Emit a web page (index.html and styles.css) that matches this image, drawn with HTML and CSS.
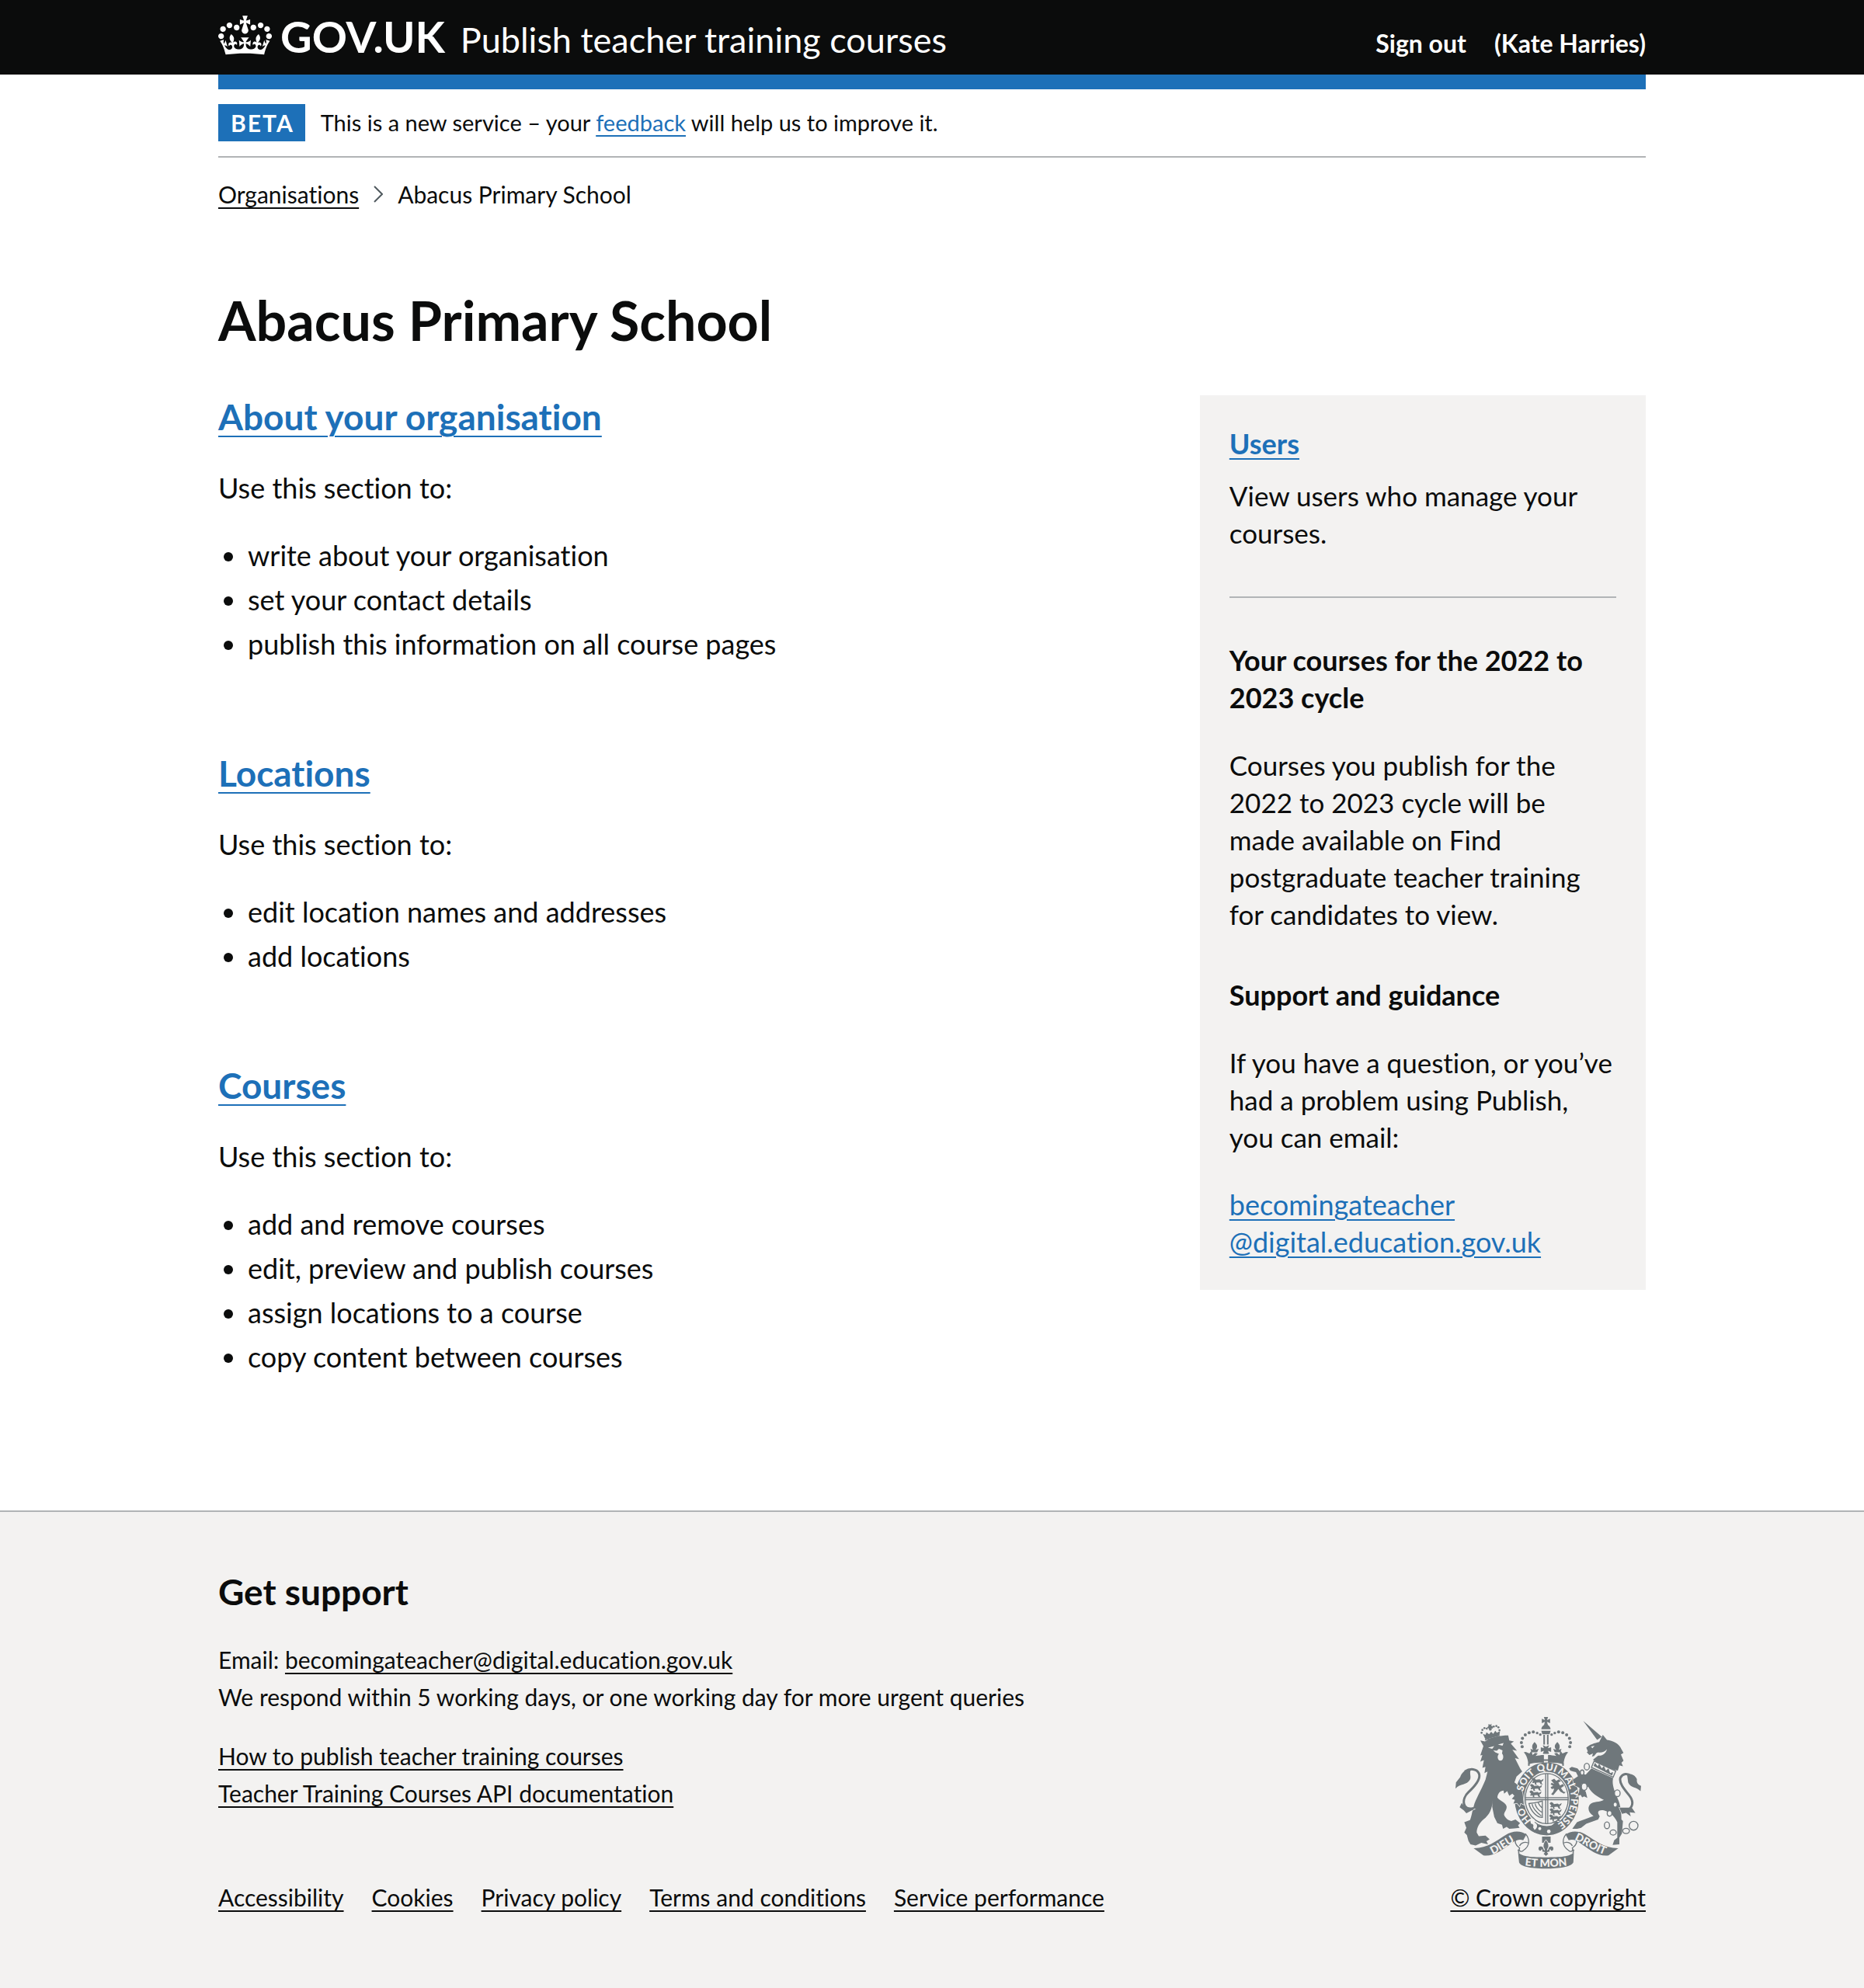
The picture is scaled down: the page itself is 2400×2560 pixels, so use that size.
FILE: index.html
```html
<!DOCTYPE html>
<html lang="en">
<head>
<meta charset="utf-8">
<meta name="viewport" content="width=device-width, initial-scale=1">
<title>Abacus Primary School - Publish teacher training courses - GOV.UK</title>
<link rel="stylesheet" href="styles.css">
</head>
<body>
<header class="header">
  <div class="container header-inner">
    <a class="logo" href="#">
      <svg class="crown" viewBox="0 0 132 97" aria-hidden="true"><path fill="currentColor" fill-rule="evenodd" d="M25 30.2c3.5 1.5 7.7-.2 9.1-3.7 1.5-3.6-.2-7.8-3.9-9.2-3.6-1.4-7.6.3-9.1 3.9-1.4 3.5.3 7.5 3.9 9zM9 39.5c3.6 1.5 7.8-.2 9.2-3.7 1.5-3.6-.2-7.8-3.9-9.1-3.6-1.5-7.6.2-9.1 3.8-1.4 3.5.3 7.5 3.8 9zM4.4 57.2c3.5 1.5 7.7-.2 9.1-3.8 1.5-3.6-.2-7.7-3.9-9.1-3.5-1.5-7.6.3-9.1 3.8-1.4 3.5.3 7.6 3.9 9.1zm38.3-21.4c3.5 1.5 7.7-.2 9.1-3.8 1.5-3.6-.2-7.7-3.9-9.1-3.6-1.5-7.6.3-9.1 3.8-1.3 3.6.4 7.7 3.9 9.1zm64.4-5.6c-3.6 1.5-7.8-.2-9.1-3.7-1.5-3.6.2-7.8 3.8-9.2 3.6-1.4 7.7.3 9.2 3.9 1.3 3.5-.4 7.5-3.9 9zm15.9 9.3c-3.6 1.5-7.7-.2-9.1-3.7-1.5-3.6.2-7.8 3.7-9.1 3.6-1.5 7.7.2 9.2 3.8 1.5 3.5-.3 7.5-3.8 9zm4.7 17.7c-3.6 1.5-7.8-.2-9.2-3.8-1.5-3.6.2-7.7 3.9-9.1 3.6-1.5 7.7.3 9.2 3.8 1.3 3.5-.4 7.6-3.9 9.1zM89.3 35.8c-3.6 1.5-7.8-.2-9.2-3.8-1.4-3.6.2-7.7 3.9-9.1 3.6-1.5 7.7.3 9.2 3.8 1.4 3.6-.3 7.7-3.9 9.1zM69.7 17.7l8.9 4.7V9.3l-8.9 2.8c-.2-.3-.5-.6-.9-.9L72.4 0H59.6l3.5 11.2c-.3.3-.6.5-.9.9l-8.8-2.8v13.1l8.8-4.7c.3.3.6.7.9.9l-5 15.4v.1c-.2.8-.4 1.6-.4 2.4 0 4.1 3.1 7.5 7 8.1h.2c.3 0 .7.1 1 .1.4 0 .7 0 1-.1h.2c4-.6 7.1-4.1 7.1-8.1 0-.8-.1-1.7-.4-2.4V34l-5.1-15.4c.4-.2.7-.6 1-.9zM66 92.8c16.9 0 32.8 1.1 47.1 3.2 4-16.9 8.9-26.7 14-33.5l-9.6-3.4c1 4.9 1.1 7.2 0 10.2-1.5-1.4-3-4.3-4.2-8.7L108.6 76c2.8-2 5-3.2 7.5-3.3-4.4 9.4-10 11.9-13.6 11.2-4.3-.8-6.3-4.6-5.6-7.9 1-4.7 5.7-5.9 8-.5 4.3-8.7-3-11.4-7.6-8.8 7.1-7.2 7.9-13.5 2.1-21.1-8 6.1-8.1 12.3-4.5 20.8-4.7-5.4-12.1-2.5-9.5 6.2 3.4-5.2 7.9-2 7.2 3.1-.6 4.3-6.4 7.8-13.5 7.2-10.3-.9-10.9-8-11.2-13.8 2.5-.5 7.1 1.8 11 7.3L80.2 60c-4.1 4.4-8 5.3-12.3 5.4 1.4-4.4 8-11.6 8-11.6H55.5s6.4 7.2 7.9 11.6c-4.2-.1-8-1-12.3-5.4l1.4 16.4c3.9-5.5 8.5-7.7 10.9-7.3-.3 5.8-.9 12.8-11.1 13.8-7.2.6-12.9-2.9-13.5-7.2-.7-5 3.8-8.3 7.1-3.1 2.7-8.7-4.6-11.6-9.4-6.2 3.7-8.5 3.6-14.7-4.6-20.8-5.8 7.6-5 13.9 2.2 21.1-4.7-2.6-11.9.1-7.7 8.8 2.3-5.5 7.1-4.2 8.1.5.7 3.3-1.3 7.1-5.7 7.9-3.5.7-9-1.8-13.5-11.2 2.5.1 4.7 1.3 7.5 3.3l-4.7-15.4c-1.2 4.4-2.7 7.2-4.3 8.7-1.1-3-.9-5.3 0-10.2l-9.5 3.4c5 6.9 9.9 16.7 14 33.5 14.8-2.1 30.8-3.2 47.7-3.2z"/></svg>
      <span>GOV.UK</span>
    </a>
    <a class="service-name" href="#">Publish teacher training courses</a>
    <nav class="account" aria-label="Account">
      <a href="#">Sign out</a>
      <a href="#">(Kate Harries)</a>
    </nav>
  </div>
</header>

<div class="container">
  <div class="phase">
    <strong class="tag">BETA</strong>
    <span>This is a new service – your <a class="link" href="#">feedback</a> will help us to improve it.</span>
  </div>
  <nav class="breadcrumbs" aria-label="Breadcrumb">
    <a class="link link-dark" href="#">Organisations</a>
    <svg class="chevron" viewBox="0 0 12 22" aria-hidden="true"><path d="M1 1l10 10L1 21" fill="none" stroke="currentColor" stroke-width="2"/></svg>
    <span>Abacus Primary School</span>
  </nav>
</div>

<main class="container main">
  <h1>Abacus Primary School</h1>
  <div class="columns">
    <div class="sections">
      <section>
        <h2><a class="link" href="#">About your organisation</a></h2>
        <p>Use this section to:</p>
        <ul>
          <li>write about your organisation</li>
          <li>set your contact details</li>
          <li>publish this information on all course pages</li>
        </ul>
      </section>
      <section>
        <h2><a class="link" href="#">Locations</a></h2>
        <p>Use this section to:</p>
        <ul>
          <li>edit location names and addresses</li>
          <li>add locations</li>
        </ul>
      </section>
      <section>
        <h2><a class="link" href="#">Courses</a></h2>
        <p>Use this section to:</p>
        <ul>
          <li>add and remove courses</li>
          <li>edit, preview and publish courses</li>
          <li>assign locations to a course</li>
          <li>copy content between courses</li>
        </ul>
      </section>
    </div>
    <aside class="sidebar">
      <section class="users">
        <h3><a class="link" href="#">Users</a></h3>
        <p>View users who manage your courses.</p>
      </section>
      <section class="note">
        <h3>Your courses for the 2022 to 2023 cycle</h3>
        <p>Courses you publish for the 2022 to 2023 cycle will be made available on Find postgraduate teacher training for candidates to view.</p>
      </section>
      <section class="note">
        <h3>Support and guidance</h3>
        <p>If you have a question, or you’ve had a problem using Publish, you can email:</p>
        <p class="email"><a class="link" href="#">becomingateacher<br>@digital.education.gov.uk</a></p>
      </section>
    </aside>
  </div>
</main>

<footer class="footer">
  <div class="container footer-inner">
    <div class="footer-main">
      <h2>Get support</h2>
      <p>Email: <a class="link link-dark" href="#">becomingateacher@digital.education.gov.uk</a><br>We respond within 5 working days, or one working day for more urgent queries</p>
      <ul class="guides">
        <li><a class="link link-dark" href="#">How to publish teacher training courses</a></li>
        <li><a class="link link-dark" href="#">Teacher Training Courses API documentation</a></li>
      </ul>
      <ul class="legal">
        <li><a class="link link-dark" href="#">Accessibility</a></li>
        <li><a class="link link-dark" href="#">Cookies</a></li>
        <li><a class="link link-dark" href="#">Privacy policy</a></li>
        <li><a class="link link-dark" href="#">Terms and conditions</a></li>
        <li><a class="link link-dark" href="#">Service performance</a></li>
      </ul>
    </div>
    <a class="link link-dark copyright" href="#">
      <svg class="arms" viewBox="42 30 718 592" aria-hidden="true">
        <defs>
          <path id="garter" d="M395 458A94 109 0 0 1 395 240A94 109 0 0 1 395 458"/>
          <path id="dieu" d="M172 570C212 556 242 530 284 508"/>
          <path id="etmon" d="M296 606Q392 620 488 606"/>
          <path id="droit" d="M492 504C536 520 574 552 628 568"/>
          <path id="beast" d="M0 5l6-5 7 3 4 5 14-2 6 4 10-6-3 9-5 2 1 8 5 3h-9l-5-8-12 1-1 5 5 3h-9l-2-8-6 2-4-4 5-3z"/>
          <g id="crown-side">
            <path d="M314 168l14 6 8-10 4 16 10-8 10 2-8 10c10-2 20-4 32-4v30c-20-2-42 0-60 6-2-18-6-34-18-46zM348 130c10 10 14 18 4 30l12-4-6 14h-22l-4-14 10 4c-6-12-4-20 6-30z"/>
            <circle cx="300" cy="148" r="6"/><circle cx="297" cy="132" r="6"/><circle cx="301" cy="116" r="6"/><circle cx="312" cy="102" r="6"/><circle cx="327" cy="94" r="6"/><circle cx="343" cy="91" r="6"/><circle cx="358" cy="95" r="5"/><circle cx="370" cy="101" r="5"/>
          </g>
        </defs>
        <!-- royal crown -->
        <g class="ink">
          <use href="#crown-side"/>
          <use href="#crown-side" transform="matrix(-1 0 0 1 784 0)"/>
          <path d="M384 33h16l-4 12 12-5v17l-12-5 4 13h-16l4-13-12 5V40l12 5zM374 80c2-12 10-18 18-18s16 6 18 18zM374 86h36l-4 14h-28zM382 102h6v38h-6zM396 102h6v38h-6zM380 142l12 6 12-6-4 12 12-4v18l-12-4 4 12h-24l4-12-12 4v-18l12 4z"/>
        </g>
        <path class="line" stroke-width="6" d="M326 222c-2-16 6-22 20-22h92c14 0 22 6 20 22"/>
        <!-- garter and shield -->
        <ellipse class="band" cx="395" cy="350" rx="106" ry="123"/>
        <ellipse class="line" stroke-width="4" cx="395" cy="349" rx="83" ry="97"/>
        <path class="line" stroke-width="4" d="M391 252v194M399 252v194M311 345h168M311 353h168"/>
        <g class="ink">
          <use href="#beast" x="336" y="268"/><use href="#beast" x="330" y="292"/><use href="#beast" x="328" y="317"/>
          <use href="#beast" x="406" y="362"/><use href="#beast" x="406" y="386"/><use href="#beast" x="404" y="410"/>
          <path d="M412 278l12-6 8 8 10-6 8 8-10 4 6 12 12-6 4 8-12 8 10 14 8 2-6 6-14-8-8-10-12 14-8 10-8-4 8-10 4-12-10 2-4-8 10-4-10-6 4-6 10 4z"/>
        </g>
        <path class="line" stroke-width="4" d="M326 368c16-2 36-4 52-10v64c-20 0-44-22-52-54zM338 370c4 20 20 34 36 46M350 368c2 14 14 26 26 34M362 364c2 8 8 14 14 20"/>
        <path class="ink" d="M334 446l12-10 24 20 36 6 26-26 20 10 4 16-24 18-40 10-44-10-20-14z"/>
        <path class="paper" d="M330 428c14-4 24 4 18 14 12 4 14 20 0 28l-6-10c4-8 0-14-8-14z"/>
        <circle class="paper" cx="368" cy="465" r="6"/><circle class="paper" cx="403" cy="476" r="7"/>
        <!-- lion -->
        <g class="ink edged">
          <path d="M138 124l18 4C178 112 215 104 246 104L250 124 268 128 256 136 280 164 262 160 288 196 272 192 292 232 300 244 278 264 270 286C284 296 298 310 302 330L306 372 294 366 290 378 280 366 266 368 272 354 260 350 270 338 262 330 250 338 242 320 230 330 228 318C215 318 205 330 204 345 212 358 236 362 240 380 240 395 230 400 230 412 234 424 246 434 258 436L274 430 292 444 284 452 290 462 270 464 250 466 240 458 226 466 222 450 204 444 192 420 184 380 186 352C184 390 174 410 150 430 134 444 124 462 124 480L132 494 158 492 174 506 162 514 168 526 142 520 120 530 100 526 92 512 86 490 76 480 84 462 76 440 98 432C104 420 106 400 112 380 120 350 140 320 158 276L166 244 154 250 158 226 146 230 152 200 138 206 146 180 138 182 150 146z"/>
          <path d="M102 236C80 234 66 248 60 266L44 286 42 310C60 290 86 298 98 276 104 262 94 252 102 236zM66 366l-8 16 16 12 10 12 30-16-30-2z"/>
        </g>
        <g class="ink">
          <circle cx="143" cy="94" r="4"/><circle cx="146" cy="83" r="4"/><circle cx="154" cy="76" r="4"/><circle cx="163" cy="78" r="4"/><circle cx="212" cy="84" r="4"/><circle cx="208" cy="73" r="4"/><circle cx="200" cy="68" r="4"/><circle cx="190" cy="70" r="4"/><circle cx="183" cy="74" r="4"/>
          <path d="M170 60l6 3 6-4-2 8 7 2-6 5 1 10-8 2-5-10-6-1 6-6zM148 98l10 4 4-10 10 8 8-10 8 8 8-12 6 8 12-6-2 18-54 14z"/>
        </g>
        <path class="line" stroke-width="9" d="M112 386C68 398 64 350 92 324 120 298 142 270 132 250 124 234 100 230 78 244"/>
        <path class="line" stroke-width="4" d="M156 122l58-14"/>
        <path class="paper" d="M168 152l24-6-8 10zM206 140l22-6-4 10zM188 162l14 2 8-8 14 6-2 12c8 8 6 28-6 28-12 0-14-18-6-26l-14-6z"/>
        <!-- unicorn -->
        <g class="ink edged">
          <path d="M536 48L608 110 590 122zM612 102L628 122C650 126 674 134 684 158L692 172 682 178 692 202 684 210 690 224 676 220 670 240C640 236 604 220 574 198L592 184C600 176 596 168 588 172L578 184 570 186 574 174 560 180 550 170 554 166 548 152C560 140 580 134 598 130z"/>
          <path d="M568 232L652 270C646 290 656 320 670 350 680 372 684 400 684 430L690 436 686 484 676 500 676 526 650 528 656 510 668 500 668 440C654 410 634 400 616 394 596 392 590 398 596 410L600 418 594 430 548 446 528 462 512 466 494 466 512 440 544 428 576 416C556 404 552 386 562 372 576 358 600 364 616 354 590 340 570 330 556 304L530 292 536 310 546 322 552 346 540 340 532 344 526 334 510 342 520 324 522 308 500 296 496 276 516 262 508 246 498 244 486 240 482 232 492 226 514 232 530 252 546 256z"/>
          <path d="M706 256c14-6 30 0 38 18-2 12 2 20 16 26l-2 20c-16-18-40-12-48-34zM676 384l10 24 16-4 18 14-4-16 22 2-14-20z"/>
        </g>
        <path class="line" stroke-width="9" d="M684 392C724 402 738 366 714 336 694 312 674 288 680 268 690 250 708 250 722 262"/>
        <path class="cut" d="M578 204L662 242 652 266 568 228z"/>
        <path class="ink" d="M576 222l6-12 10 14 6-10 10 18 8-10 8 18 10-8 6 18 12-4-4 14z"/>
        <path class="paper" d="M566 148l14-4-8 10zM590 182c18 4 34-6 38-24-10 12-22 14-36 12z"/>
        <!-- chain -->
        <g class="chain">
          <ellipse cx="550" cy="225" rx="10" ry="13"/><ellipse cx="532" cy="248" rx="7" ry="10"/><ellipse cx="540" cy="303" rx="11" ry="14"/><ellipse cx="668" cy="328" rx="11" ry="13"/><ellipse cx="660" cy="372" rx="8" ry="10"/><ellipse cx="638" cy="406" rx="9" ry="11"/><ellipse cx="628" cy="452" rx="10" ry="13"/><ellipse cx="652" cy="480" rx="12" ry="10"/><ellipse cx="702" cy="474" rx="13" ry="10"/><circle cx="731" cy="454" r="17"/>
        </g>
        <!-- scroll -->
        <g class="ink">
          <path d="M112 541C165 542 200 512 236 490 262 472 296 472 316 488L304 510C282 502 264 518 250 528 220 548 190 574 150 569zM672 541C619 542 584 512 548 490 522 472 488 472 468 488L480 510C502 502 520 518 534 528 564 548 594 574 634 569z"/>
          <path d="M284 556C296 574 340 576 392 576 444 576 488 574 500 556L498 596C490 614 440 620 392 620 344 620 294 614 288 596zM377 496h33v24h-33z"/>
        </g>
        <path class="line" stroke-width="4" d="M312 484c18 20 20 48-8 66-6 6-20 4-14-10-16-10-22-26-12-40M326 522c-12-8-30-4-36 10M472 484c-18 20-20 48 8 66 6 6 20 4 14-10 16-10 22-26 12-40M458 522c12-8 30-4 36 10M284 546l4 14M500 546l-4 14"/>
        <path class="fleur" d="M392 508c12 14 14 26 6 40 2-20 26-20 24-4-2 10-12 10-14 2 0 12-6 10-10 10l4 8-10 8-10-8 4-8c-4 0-10 2-10-10-2 8-12 8-14-2-2-16 22-16 24 4-8-14-6-26 6-40z"/>
        <g class="motto" text-anchor="middle">
          <text><textPath href="#garter" startOffset="15%">HO</textPath></text>
          <text><textPath href="#garter" startOffset="36%">SOIT</textPath></text>
          <text><textPath href="#garter" startOffset="50%">QUI</textPath></text>
          <text><textPath href="#garter" startOffset="63%">MAL</textPath></text>
          <text><textPath href="#garter" startOffset="72%">Y</textPath></text>
          <text><textPath href="#garter" startOffset="84%">PENSE</textPath></text>
          <text class="motto-scroll"><textPath href="#dieu" startOffset="50%">DIEU</textPath></text>
          <text class="motto-scroll"><textPath href="#etmon" startOffset="50%">ET MON</textPath></text>
          <text class="motto-scroll"><textPath href="#droit" startOffset="50%">DROIT</textPath></text>
        </g>
      </svg>
      <span>© Crown copyright</span>
    </a>
  </div>
</footer>
</body>
</html>
```
FILE: styles.css
```css
* {
  box-sizing: border-box;
}

body {
  display: flex;
  flex-direction: column;
  min-height: 100vh;
  margin: 0;
  background: #ffffff;
  color: #0b0c0c;
  font: 36px/48px Lato, "Liberation Sans", sans-serif;
  font-variant-ligatures: none;
}

h1,
h2,
h3,
p,
ul {
  margin: 0;
}

.container {
  width: calc(100% - 60px);
  max-width: 1838px;
  margin: 0 auto;
}

.link {
  color: #1d70b8;
  text-decoration: underline;
  text-decoration-thickness: 2px;
  text-underline-offset: 5px;
}

.link-dark {
  color: #0b0c0c;
}

/* Header */

.header {
  background: #0b0c0c;
  color: #ffffff;
}

.header a {
  color: inherit;
  text-decoration: none;
}

.header-inner {
  display: flex;
  flex-wrap: wrap;
  align-items: baseline;
  gap: 0 20px;
  padding: 20px 0 22px;
}

.logo {
  display: flex;
  align-items: baseline;
  gap: 11px;
  font-size: 56px;
  font-weight: 700;
  line-height: 54px;
}

.crown {
  align-self: flex-start;
  width: 69px;
  height: 51px;
}

.service-name {
  font-size: 45px;
  line-height: 40px;
}

.account {
  display: flex;
  gap: 36px;
  margin-left: auto;
  font-size: 32px;
  font-weight: 700;
  line-height: 32px;
}

/* Phase banner and breadcrumbs */

.phase {
  display: flex;
  gap: 20px;
  padding: 19px 0;
  border-top: 19px solid #1d70b8;
  border-bottom: 2px solid #b1b4b6;
  font-size: 29px;
}

.tag {
  padding: 0 14px 0 16px;
  background: #1d70b8;
  color: #ffffff;
  font-size: 30px;
  letter-spacing: 2px;
}

.breadcrumbs {
  display: flex;
  align-items: center;
  gap: 19px;
  margin-top: 27px;
  font-size: 30px;
  line-height: 40px;
}

.chevron {
  width: 12px;
  height: 22px;
  color: #505a5f;
}

/* Main content */

.main {
  flex: 1 0 auto;
  padding: 102px 0 174px;
}

h1 {
  margin-bottom: 57px;
  font-size: 70px;
  line-height: 80px;
}

h2 {
  font-size: 46px;
  line-height: 56px;
}

h2 .link {
  text-underline-offset: 7px;
}

h3 {
  font-size: 36px;
  line-height: 48px;
}

.columns {
  display: grid;
  grid-template-columns: minmax(0, 21fr) minmax(0, 10fr);
  gap: 58px;
  align-items: start;
}

.sections {
  display: grid;
  gap: 115px;
}

.sections h2,
.sections p {
  margin-bottom: 39px;
}

.sections ul {
  display: grid;
  gap: 9px;
  padding-left: 38px;
}

.sidebar {
  padding: 38px;
  background: #f3f2f1;
  font-size: 35px;
}

.users {
  display: grid;
  gap: 19px;
  padding-bottom: 58px;
  border-bottom: 2px solid #b1b4b6;
}

.note {
  display: grid;
  gap: 39px;
  margin-top: 56px;
}

.email {
  font-size: 36px;
}

/* Footer */

.footer {
  padding: 75px 0 93px;
  border-top: 2px solid #b1b4b6;
  background: #f3f2f1;
  font-size: 30px;
}

.footer-inner {
  display: flex;
  flex-wrap: wrap;
  align-items: flex-end;
  justify-content: space-between;
  gap: 38px;
}

.footer h2 {
  margin-bottom: 35px;
}

.footer ul {
  padding: 0;
  list-style: none;
}

.guides {
  margin: 28px 0 86px;
}

.legal {
  display: flex;
  flex-wrap: wrap;
  gap: 0 36px;
}

.copyright {
  display: grid;
  justify-items: center;
  gap: 12px;
}

.arms {
  width: 239px;
  height: 197px;
}

.ink {
  fill: #6f777b;
}

.edged {
  stroke: #f3f2f1;
  stroke-width: 4;
  paint-order: stroke;
}

.paper {
  fill: #f3f2f1;
}

.line {
  fill: none;
  stroke: #6f777b;
}

.cut {
  fill: #f3f2f1;
  stroke: #6f777b;
  stroke-width: 4;
}

.chain {
  fill: #f3f2f1;
  stroke: #6f777b;
  stroke-width: 4;
}

.band {
  fill: #f3f2f1;
  stroke: #6f777b;
  stroke-width: 36px;
}

.fleur {
  fill: #6f777b;
  stroke: #f3f2f1;
  stroke-width: 3;
}

.motto {
  fill: #f3f2f1;
  font-size: 38px;
  font-weight: 900;
}

.motto-scroll {
  font-size: 42px;
}
```
